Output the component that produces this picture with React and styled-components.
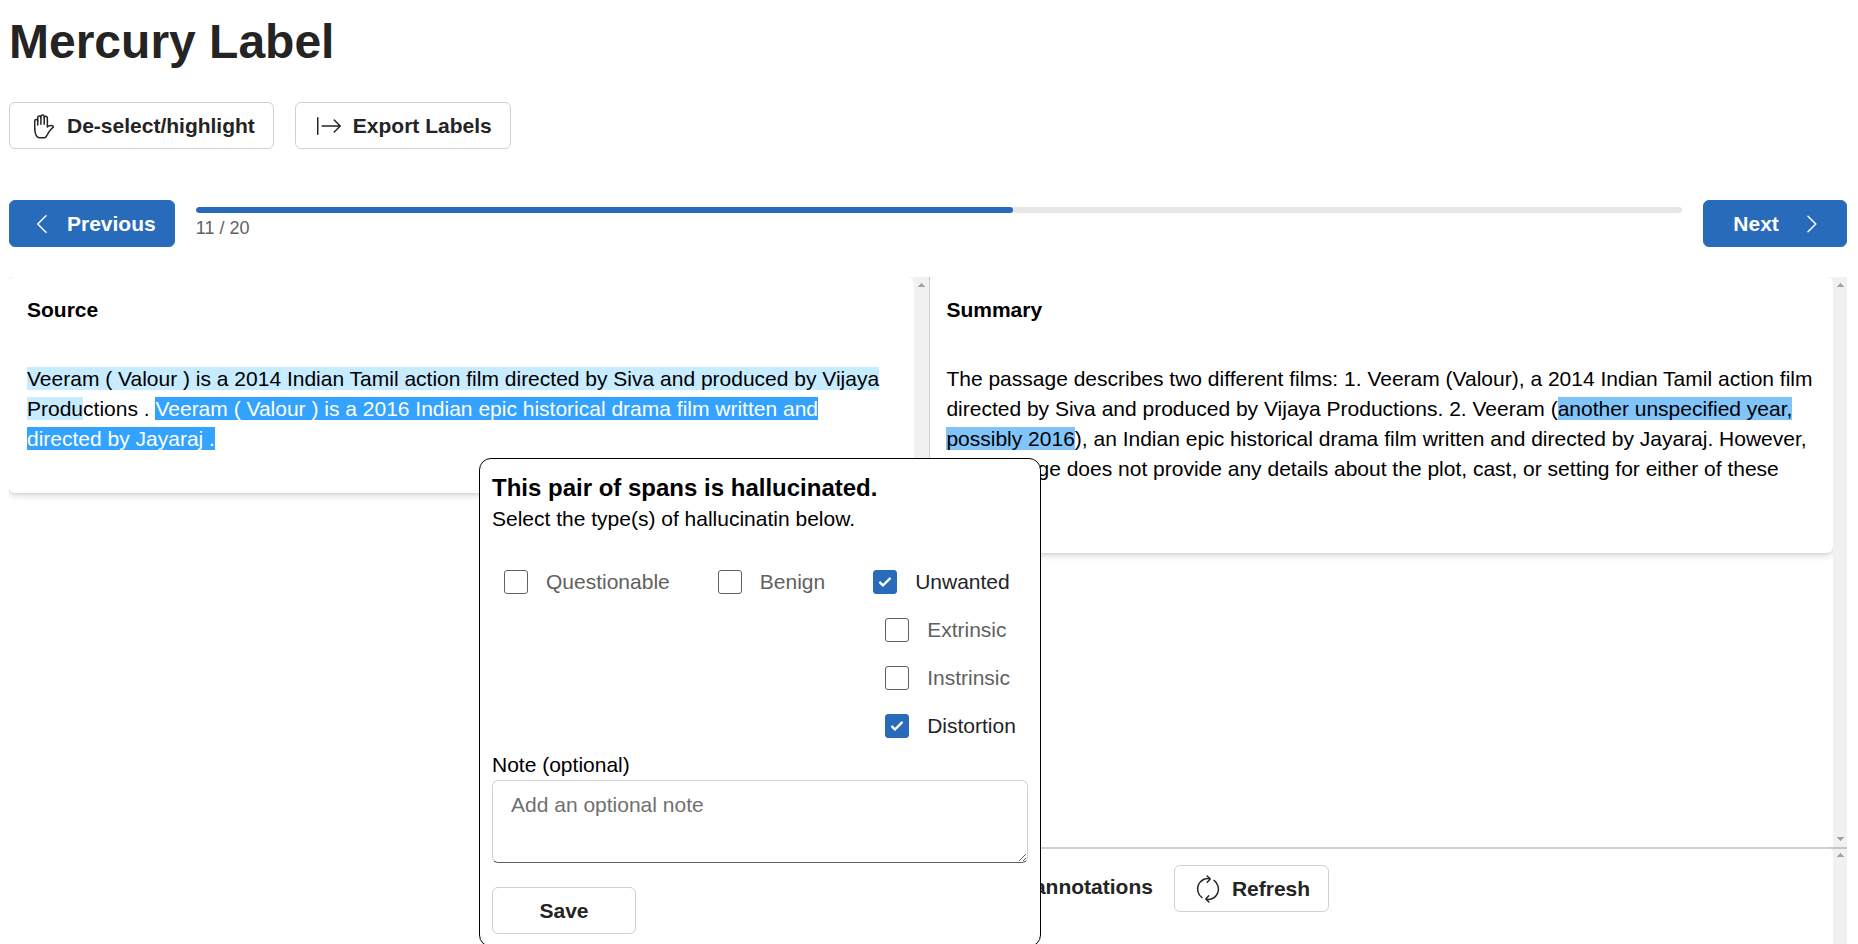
import React from "react";
import styled, { createGlobalStyle, css } from "styled-components";

const GlobalStyle = createGlobalStyle`
  *, *::before, *::after { box-sizing: border-box; }
  html, body { margin: 0; height: 100%; overflow: hidden; background: #fff; }
  body, button, textarea {
    font-family: "Liberation Sans", Arial, sans-serif;
    font-size: 21px;
    line-height: 30px;
  }
  body { color: #000; }
`;

const Page = styled.div`
  position: relative;
  display: flex;
  flex-direction: column;
  height: 944px;
  padding: 9px 11px 0 9px;
  overflow: hidden;
`;

const Title = styled.h1`
  margin: 0;
  color: #242424;
  font-size: 48px;
  line-height: 66px;
`;

const Toolbar = styled.div`
  display: flex;
  gap: 21px;
  margin-top: 27px;
`;

const Button = styled.button`
  display: inline-flex;
  align-items: center;
  justify-content: center;
  gap: 9px;
  height: 47px;
  min-width: 144px;
  padding: 0 18px;
  border: 1px solid #d1d1d1;
  border-radius: 6px;
  background: #fff;
  color: #242424;
  font-weight: 600;
  white-space: nowrap;
  flex: none;
  ${(p) =>
    p.$primary &&
    css`
      border-color: #286bbb;
      background: #286bbb;
      color: #fff;
    `}
`;

const NextButton = styled(Button)`
  justify-content: flex-start;
  gap: 17px;
  padding-left: 29.3px;
`;

const IconSvg = styled.svg`
  width: 30px;
  height: 30px;
  flex: none;
  fill: none;
  stroke: currentColor;
  stroke-width: 1;
  stroke-linecap: round;
  stroke-linejoin: round;
`;

const Icon = ({ children }) => <IconSvg viewBox="0 0 20 20">{children}</IconSvg>;

const HandIcon = () => (
  <Icon>
    <path d="M4.500 12.200V6.600a1 1 0 0 1 2 0" />
    <path d="M6.500 9.400V4.400a1.050 1.050 0 0 1 2.100 0" />
    <path d="M8.600 8.800V3.700a1.100 1.100 0 0 1 2.200 0v5.100" />
    <path d="M10.800 4.600a1.050 1.050 0 0 1 2.100 0v6.100C13.700 9.800 14.600 9.500 15.700 9.700C16.900 9.900 17.300 10.500 16.500 11.100C15.500 11.900 14.800 12.700 14 13.900C13.400 14.800 12.800 16 12.200 16.900C11.800 17.600 11.400 17.900 10.700 17.900H7.800C6.700 17.900 5.900 17.300 5.400 16.200C4.800 14.900 4.500 13.500 4.500 12.200" />
  </Icon>
);

const ExportIcon = () => (
  <Icon>
    <path d="M2.500 4.500v11M5.500 10h12M13.500 6l4 4-4 4" />
  </Icon>
);

const SyncIcon = () => (
  <Icon>
    <path d="M6 15.700A7 7 0 0 1 11.300 3.100M9.400 1.300l2.100 2-2 2.200" />
    <path d="M14 4.300A7 7 0 0 1 8.700 16.900M10.600 18.700l-2.100-2 2-2.200" />
  </Icon>
);

const ChevronLeftIcon = () => (
  <Icon>
    <path d="M12 4.500L6.500 10l5.500 5.500" />
  </Icon>
);

const ChevronRightIcon = () => (
  <Icon>
    <path d="M8 4.800l5.200 5.200L8 15.200" />
  </Icon>
);

const Navigation = styled.div`
  display: flex;
  align-items: center;
  gap: 21px;
  margin-top: 51px;
`;

const Progress = styled.div`
  flex: 1;
  display: flex;
  flex-direction: column;
  gap: 3px;
`;

const ProgressTrack = styled.div`
  height: 6px;
  border-radius: 3px;
  background: #e6e6e6;
  overflow: hidden;
`;

const ProgressFill = styled.div`
  height: 100%;
  border-radius: inherit;
  background: #286bbb;
`;

const ProgressText = styled.div`
  color: #616161;
  font-size: 18px;
  line-height: 24px;
`;

const Workspace = styled.div`
  flex: 1;
  display: grid;
  grid-template-columns: 920px 1fr;
  margin-top: 30px;
  min-height: 0;
`;

const Column = styled.div`
  display: flex;
  flex-direction: column;
  min-height: 0;
  ${(p) => p.$divided && css`box-shadow: inset 1px 0 #d1d1d1;`}
`;

const Pane = styled.div`
  display: flex;
  min-height: 0;
  flex: ${(p) => (p.$height ? `0 0 ${p.$height}px` : "1")};
`;

const PaneBody = styled.div`
  flex: 1;
  min-width: 0;
  overflow: hidden;
`;

const Scrollbar = styled.div`
  display: flex;
  flex-direction: column;
  justify-content: space-between;
  align-items: center;
  flex: 0 0 ${(p) => p.$width || 14}px;
  padding: 6px 0;
  background: #f1f1f1;
`;

const ArrowSvg = styled.svg`
  width: 7px;
  height: 4px;
  fill: #a3a3a3;
  shape-rendering: crispEdges;
`;

const ArrowUp = () => (
  <ArrowSvg viewBox="0 0 7 4">
    <path d="M3 0h1v1h1v1h1v1h1v1H0V3h1V2h1V1h1z" />
  </ArrowSvg>
);

const ArrowDown = () => (
  <ArrowSvg viewBox="0 0 7 4">
    <path d="M0 0h7v1H6v1H5v1H4v1H3V3H2V2H1V1H0z" />
  </ArrowSvg>
);

const SplitLine = styled.div`
  position: relative;
  z-index: 1;
  height: 2px;
  flex: none;
  margin-bottom: -2px;
  background: rgba(0, 0, 0, 0.18);
`;

const Card = styled.section`
  display: flex;
  flex-direction: column;
  gap: 18px;
  padding: 18px;
  border-radius: 6px;
  ${(p) => p.$tall && css`min-height: 200px;`}
  box-shadow: 0 0 3px rgba(0, 0, 0, 0.12), 0 3px 6px rgba(0, 0, 0, 0.14);
  ${Column} + ${Column} & {
    padding-left: 17.4px;
  }
`;

const CardTitle = styled.div`
  font-weight: 600;
`;

const Passage = styled.p`
  margin: 21px 0;
`;

const tones = {
  light: "#c7ebff",
  medium: "#80c4fa",
  strong: "#33a3ff",
};

const Highlight = styled.span`
  background: ${(p) => tones[p.$tone]};
  color: ${(p) => (p.$tone === "strong" ? "#fff" : "inherit")};
`;

const AnnotationsHeader = styled.div`
  display: flex;
  gap: 21px;
  color: #242424;
`;

const AnnotationsTitle = styled.span`
  padding-top: 7px;
  font-weight: 600;
`;

const Popover = styled.div`
  position: absolute;
  left: 479px;
  top: 458px;
  z-index: 2;
  display: flex;
  flex-direction: column;
  width: 562px;
  padding: 12px;
  border: 1px solid #000;
  border-radius: 12px;
  background: #fff;
`;

const PopoverTitle = styled.div`
  font-size: 24px;
  line-height: 33px;
  font-weight: 600;
`;

const Options = styled.div`
  display: flex;
  gap: 24px;
  margin-top: 24px;
`;

const SubOptions = styled.div`
  padding-left: 12px;
`;

const Option = styled.label`
  display: flex;
  align-items: center;
  height: 48px;
  padding: 0 12px;
  gap: 18px;
  color: ${(p) => (p.$checked ? "#242424" : "#616161")};
`;

const Box = styled.span`
  display: flex;
  width: 24px;
  height: 24px;
  flex: none;
  border-radius: 3px;
  border: 1px solid ${(p) => (p.$checked ? "#286bbb" : "#616161")};
  background: ${(p) => (p.$checked ? "#286bbb" : "#fff")};
`;

const Check = styled.svg`
  width: 22px;
  height: 22px;
  fill: none;
  stroke: #fff;
  stroke-width: 2.4;
  stroke-linecap: round;
  stroke-linejoin: round;
`;

const CheckOption = ({ label, checked }) => (
  <Option $checked={checked}>
    <Box $checked={checked}>
      {checked && (
        <Check viewBox="1 1 22 22">
          <path d="M7.200 12.600l2.700 2.900L16.800 8.600" />
        </Check>
      )}
    </Box>
    {label}
  </Option>
);

const Note = styled.textarea`
  display: block;
  width: 100%;
  height: 83px;
  margin: 0 0 24px;
  padding: 9px 18px;
  border: 1px solid #d1d1d1;
  border-bottom-color: #616161;
  border-radius: 6px;
  outline: none;
  resize: vertical;
  &::placeholder {
    color: #707070;
    opacity: 1;
  }
`;

const SaveButton = styled(Button)`
  align-self: flex-start;
`;

const current = 11;
const total = 20;

export default function App() {
  return (
    <Page>
      <GlobalStyle />
      <Title>Mercury Label</Title>
      <Toolbar>
        <Button><HandIcon />De-select/highlight</Button>
        <Button><ExportIcon />Export Labels</Button>
      </Toolbar>
      <Navigation>
        <Button $primary><ChevronLeftIcon />Previous</Button>
        <Progress>
          <ProgressTrack>
            <ProgressFill style={{ width: `${(current / total) * 100}%` }} />
          </ProgressTrack>
          <ProgressText>{`${current} / ${total}`}</ProgressText>
        </Progress>
        <NextButton $primary>Next<ChevronRightIcon /></NextButton>
      </Navigation>
      <Workspace>
        <Column>
          <Pane>
            <PaneBody>
              <Card>
                <CardTitle>Source</CardTitle>
                <Passage>
                  <Highlight $tone="light">
                    Veeram ( Valour ) is a 2014 Indian Tamil action film directed by Siva and produced by Vijaya Produ
                  </Highlight>
                  ctions .{" "}
                  <Highlight $tone="strong">
                    Veeram ( Valour ) is a 2016 Indian epic historical drama film written and directed by Jayaraj .
                  </Highlight>
                </Passage>
              </Card>
            </PaneBody>
            <Scrollbar $width={15}><ArrowUp /></Scrollbar>
          </Pane>
        </Column>
        <Column $divided>
          <Pane $height={570}>
            <PaneBody>
              <Card>
                <CardTitle>Summary</CardTitle>
                <Passage>
                  The passage describes two different films: 1. Veeram (Valour), a 2014 Indian Tamil action film
                  directed by Siva and produced by Vijaya Productions. 2. Veeram (
                  <Highlight $tone="medium">another unspecified year, possibly 2016</Highlight>
                  ), an Indian epic historical drama film written and directed by Jayaraj. However, the passage does
                  not provide any details about the plot, cast, or setting for either of these films.
                </Passage>
              </Card>
            </PaneBody>
            <Scrollbar><ArrowUp /><ArrowDown /></Scrollbar>
          </Pane>
          <SplitLine />
          <Pane>
            <PaneBody>
              <Card $tall>
                <AnnotationsHeader>
                  <AnnotationsTitle>Existing annotations</AnnotationsTitle>
                  <Button><SyncIcon />Refresh</Button>
                </AnnotationsHeader>
              </Card>
            </PaneBody>
            <Scrollbar><ArrowUp /></Scrollbar>
          </Pane>
        </Column>
      </Workspace>
      <Popover>
        <PopoverTitle>This pair of spans is hallucinated.</PopoverTitle>
        <div>Select the type(s) of hallucinatin below.</div>
        <Options>
          <CheckOption label="Questionable" />
          <CheckOption label="Benign" />
          <div>
            <CheckOption label="Unwanted" checked />
            <SubOptions>
              <CheckOption label="Extrinsic" />
              <CheckOption label="Instrinsic" />
              <CheckOption label="Distortion" checked />
            </SubOptions>
          </div>
        </Options>
        <div>Note (optional)</div>
        <Note placeholder="Add an optional note" />
        <SaveButton>Save</SaveButton>
      </Popover>
    </Page>
  );
}
